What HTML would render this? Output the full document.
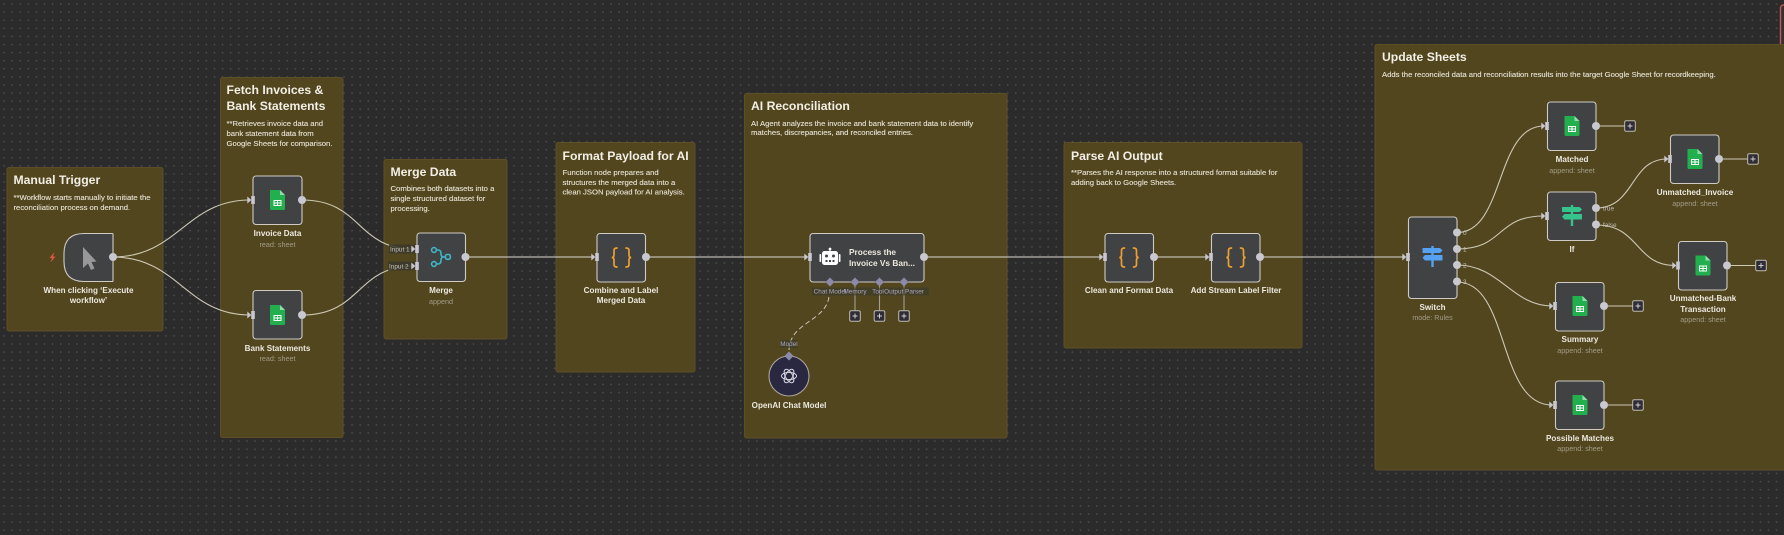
<!DOCTYPE html>
<html lang="en">
<head>
<meta charset="utf-8">
<title>Workflow</title>
<style>
html,body{margin:0;padding:0;width:1784px;height:535px;overflow:hidden;background:#2b2b2c}
#wrap{position:absolute;left:0;top:0;width:1784px;height:535px;background-color:#2b2b2c;background-image:radial-gradient(circle at 50% 50%,#4e4e50 .7px,transparent 1px);background-size:8.1px 8.1px;filter:blur(.35px)}
svg{position:absolute;left:0;top:0}
text{font-family:"Liberation Sans",sans-serif}
.st{fill:#52461f;stroke:#5c4f28;stroke-width:1}
.h{font-size:12.2px;font-weight:700;fill:#f3efe6}
.p{font-size:7.7px;fill:#e6e1d3;stroke:#e6e1d3;stroke-width:.12}
.n{fill:#414244;stroke:#cfcbc4;stroke-width:1.1}
.lb{font-size:8.1px;font-weight:700;fill:#ece8de;text-anchor:middle}
.sb{font-size:7.2px;fill:#a39d88;text-anchor:middle}
.e{fill:none;stroke:#cdc8b4;stroke-width:1.1}
.o{fill:#c9c8d0}
.pl rect{fill:#2e2c34;stroke:#bdb9b0;stroke-width:1}
.pl path{stroke:#cfcdd0;stroke-width:1;fill:none}
.sm{font-size:6.4px;fill:#c4c0bc}
.am{font-size:6.4px;fill:#a9a6c4;text-anchor:middle}
</style>
</head>
<body>
<div id="wrap">
<svg width="1784" height="535" viewBox="0 0 1784 535" xmlns="http://www.w3.org/2000/svg">
<defs>
<g id="sheet">
<path d="M-7.5-10H2.5L7.5-5V8.5Q7.5 10 6 10H-6Q-7.5 10-7.5 8.5Z" fill="#22b04f"/>
<path d="M2.5-10L7.5-5H2.5Z" fill="#8fdcaa"/>
<path d="M-4 0H4V6H-4ZM-3 1V2.5H-.5V1ZM.5 1V2.5H3V1ZM-3 3.5V5H-.5V3.5ZM.5 3.5V5H3V3.5Z" fill="#fff" fill-rule="evenodd"/>
</g>
<g id="brace" fill="none" stroke="#ef9f2e" stroke-width="1.7" stroke-linecap="round">
<path d="M-4.500-9.500Q-7.500-9.500-7.500-7V-2.500Q-7.500 0-9.700 0Q-7.500 0-7.500 2.500V7Q-7.500 9.500-4.500 9.500"/>
<path d="M4.500-9.500Q7.500-9.500 7.500-7V-2.500Q7.500 0 9.700 0Q7.500 0 7.500 2.500V7Q7.500 9.500 4.500 9.500"/>
</g>
<g id="post">
<rect x="-1.200" y="-11" width="2.400" height="21"/>
<path d="M-9.500-9H7.500L10-6.500L7.500-4H-9.500Q-10-4-10-4.500V-8.500Q-10-9-9.500-9Z"/>
<path d="M9.500-2H-7.500L-10 .8L-7.500 3.500H9.500Q10 3.500 10 3V-1.500Q10-2 9.500-2Z"/>
</g>
<g id="inp">
<path d="M-5.700-3.500L-1.700 0L-5.700 3.500Z" fill="#c9c8d0"/>
<rect x="-1.800" y="-4" width="3.600" height="8" fill="#c9c8d0"/>
</g>
<g id="plus" class="pl">
<rect x="-5.300" y="-5.300" width="10.600" height="10.600" rx="1.500"/>
<path d="M-2.500 0H2.500M0-2.500V2.500"/>
</g>
</defs>

<!-- top-right red frame -->
<rect x="1780.500" y="5" width="20" height="43" rx="3" fill="#3a2d2d" stroke="#b85a50" stroke-width="1.500"/>

<!-- stickies -->
<rect class="st" x="7" y="167.500" width="156" height="163.500" rx="2"/>
<rect class="st" x="220.500" y="77.500" width="122.500" height="360" rx="2"/>
<rect class="st" x="384" y="159.500" width="123" height="179.500" rx="2"/>
<rect class="st" x="556" y="142.500" width="139" height="229.500" rx="2"/>
<rect class="st" x="744.500" y="93.500" width="262.500" height="344.500" rx="2"/>
<rect class="st" x="1064" y="142.500" width="238" height="205.500" rx="2"/>
<rect class="st" x="1375" y="44.500" width="420" height="425.500" rx="2"/>

<!-- sticky text -->
<text class="h" x="13.500" y="184">Manual Trigger</text>
<text class="p" x="13.500" y="200">**Workflow starts manually to initiate the</text>
<text class="p" x="13.500" y="210">reconciliation process on demand.</text>

<text class="h" x="226.500" y="94">Fetch Invoices &amp;</text>
<text class="h" x="226.500" y="110">Bank Statements</text>
<text class="p" x="226.500" y="126">**Retrieves invoice data and</text>
<text class="p" x="226.500" y="136">bank statement data from</text>
<text class="p" x="226.500" y="146">Google Sheets for comparison.</text>

<text class="h" x="390.500" y="176">Merge Data</text>
<text class="p" x="390.500" y="191">Combines both datasets into a</text>
<text class="p" x="390.500" y="201">single structured dataset for</text>
<text class="p" x="390.500" y="211">processing.</text>

<text class="h" x="562.500" y="160">Format Payload for AI</text>
<text class="p" x="562.500" y="175">Function node prepares and</text>
<text class="p" x="562.500" y="185">structures the merged data into a</text>
<text class="p" x="562.500" y="194.500">clean JSON payload for AI analysis.</text>

<text class="h" x="751" y="110">AI Reconciliation</text>
<text class="p" x="751" y="126">AI Agent analyzes the invoice and bank statement data to identify</text>
<text class="p" x="751" y="135">matches, discrepancies, and reconciled entries.</text>

<text class="h" x="1071" y="160">Parse AI Output</text>
<text class="p" x="1071" y="175">**Parses the AI response into a structured format suitable for</text>
<text class="p" x="1071" y="185">adding back to Google Sheets.</text>

<text class="h" x="1382" y="61">Update Sheets</text>
<text class="p" x="1382" y="77">Adds the reconciled data and reconciliation results into the target Google Sheet for recordkeeping.</text>

<!-- edges -->
<path class="e" d="M113 257C178 257 186 200 250 200"/>
<path class="e" d="M113 257C178 257 186 315 250 315"/>
<path class="e" d="M302 200C362 200 356 249 414 249"/>
<path class="e" d="M302 315C362 315 356 266 414 266"/>
<path class="e" d="M465 257H594M646 257H807M924 257H1102M1154 257H1208M1260 257H1405" style="stroke:#dcdad0"/>
<path class="e" d="M1457 232.500C1505 232.500 1495 126 1544 126"/>
<path class="e" d="M1457 249C1505 249 1495 216 1544 216"/>
<path class="e" d="M1457 265C1500 265 1512 306 1552 306"/>
<path class="e" d="M1457 282C1510 282 1497 405 1552 405"/>
<path class="e" d="M1596 208C1635 208 1630 159 1667 159"/>
<path class="e" d="M1596 225C1640 225 1635 265.500 1675 265.500"/>
<path class="e" d="M1596 126H1625M1719 159H1748M1727 265.500H1756M1604 306H1633M1604 405H1633"/>
<path d="M855 286V311M879.500 286V311M904 286V311" fill="none" stroke="#a39d94" stroke-width="1.100"/>
<path d="M829 297C825 322 790 322 789 350" fill="none" stroke="#c9c5b4" stroke-width="1" stroke-dasharray="5 3"/>

<!-- nodes -->
<path class="n" d="M113 233.500V281Q113 281.500 112 281.500H84Q64 281.500 64 261.500V253.500Q64 233.500 84 233.500H112Q113 233.500 113 234.500Z"/>
<rect class="n" x="253" y="176" width="49" height="48.500" rx="3"/>
<rect class="n" x="253" y="290.500" width="49" height="48.500" rx="3"/>
<rect class="n" x="417" y="233" width="48.500" height="48.500" rx="3"/>
<rect class="n" x="597" y="233.500" width="48.500" height="48.500" rx="3"/>
<rect class="n" x="810" y="233.500" width="114" height="48.500" rx="3"/>
<circle cx="789" cy="376" r="20" fill="#2a2840" stroke="#a9a59c" stroke-width="1.100"/>
<rect class="n" x="1105" y="233.500" width="48.500" height="48.500" rx="3"/>
<rect class="n" x="1211.500" y="233.500" width="48.500" height="48.500" rx="3"/>
<rect class="n" x="1408.500" y="217" width="48.500" height="81.500" rx="3"/>
<rect class="n" x="1547.500" y="102" width="48.500" height="48.500" rx="3"/>
<rect class="n" x="1547.500" y="192" width="48.500" height="48.500" rx="3"/>
<rect class="n" x="1670.500" y="135" width="48.500" height="48.500" rx="3"/>
<rect class="n" x="1678.500" y="241.500" width="48.500" height="48.500" rx="3"/>
<rect class="n" x="1555.500" y="282.500" width="48.500" height="48.500" rx="3"/>
<rect class="n" x="1555.500" y="381" width="48.500" height="48.500" rx="3"/>

<!-- icons -->
<path d="M54.500 252L49.500 258H52L50.500 262.500L55.500 256.500H53Z" fill="#d9583f"/>
<path d="M83 247V268L88 263.500L91 270L94.500 268.500L91.500 262L96.500 261.500Z" fill="#98989a"/>
<use href="#sheet" x="277.500" y="200"/>
<use href="#sheet" x="277.500" y="315"/>
<use href="#sheet" x="1572" y="126"/>
<use href="#sheet" x="1695" y="159"/>
<use href="#sheet" x="1703" y="265.500"/>
<use href="#sheet" x="1580" y="306"/>
<use href="#sheet" x="1580" y="405"/>
<g fill="none" stroke="#3fb6c6" stroke-width="1.600">
<circle cx="434" cy="250" r="2.400"/>
<circle cx="434" cy="264" r="2.400"/>
<rect x="445.500" y="254.500" width="4.800" height="4.800" rx="1.500"/>
<path d="M436.500 250H438Q441 250 441 253.500V254Q441 257 444 257H445.500M436.500 264H438Q441 264 441 260.500V260Q441 257 444 257"/>
</g>
<use href="#brace" x="621.500" y="257.500"/>
<use href="#brace" x="1129" y="257.500"/>
<use href="#brace" x="1236" y="257.500"/>
<use href="#post" x="1432.500" y="257" fill="#55a2f0"/>
<use href="#post" x="1572" y="216" fill="#35c58c"/>
<!-- robot -->
<g fill="#fff">
<circle cx="830" cy="249" r="1.400"/>
<rect x="829.400" y="249" width="1.200" height="3"/>
<rect x="822" y="251" width="16" height="14" rx="2.500"/>
<rect x="819.500" y="254" width="1.700" height="8" rx=".8"/>
<rect x="838.800" y="254" width="1.700" height="8" rx=".8"/>
</g>
<g fill="#414244">
<circle cx="826.500" cy="256" r="1.500"/>
<circle cx="833.500" cy="256" r="1.500"/>
<rect x="825.500" y="260" width="2" height="2"/>
<rect x="829" y="260" width="2" height="2"/>
<rect x="832.500" y="260" width="2" height="2"/>
</g>
<!-- openai knot -->
<g fill="none" stroke="#d8d8e0" stroke-width="1" transform="translate(789 376)">
<ellipse rx="7.500" ry="3.600" transform="rotate(0)"/>
<ellipse rx="7.500" ry="3.600" transform="rotate(60)"/>
<ellipse rx="7.500" ry="3.600" transform="rotate(120)"/>
</g>

<!-- outputs -->
<g class="o">
<circle cx="113" cy="257" r="4"/>
<circle cx="302" cy="200" r="4"/>
<circle cx="302" cy="315" r="4"/>
<circle cx="465.500" cy="257" r="4"/>
<circle cx="646" cy="257" r="4"/>
<circle cx="924" cy="257" r="4"/>
<circle cx="1154" cy="257" r="4"/>
<circle cx="1260" cy="257" r="4"/>
<circle cx="1457" cy="232.500" r="4"/>
<circle cx="1457" cy="249" r="4"/>
<circle cx="1457" cy="265" r="4"/>
<circle cx="1457" cy="281.500" r="4"/>
<circle cx="1596" cy="126" r="4"/>
<circle cx="1596" cy="208" r="4"/>
<circle cx="1596" cy="224.500" r="4"/>
<circle cx="1719" cy="159" r="4"/>
<circle cx="1727" cy="265.500" r="4"/>
<circle cx="1604" cy="306" r="4"/>
<circle cx="1604" cy="405" r="4"/>
</g>
<!-- inputs -->
<use href="#inp" x="253" y="200"/>
<use href="#inp" x="253" y="315"/>
<rect x="389" y="244.500" width="27" height="9" fill="#3b382c" opacity=".85"/>
<rect x="388" y="261.500" width="27" height="9" fill="#3b382c" opacity=".85"/>
<use href="#inp" x="417" y="249"/>
<use href="#inp" x="417" y="266"/>
<use href="#inp" x="597" y="257"/>
<use href="#inp" x="810" y="257"/>
<use href="#inp" x="1105" y="257"/>
<use href="#inp" x="1211" y="257"/>
<use href="#inp" x="1408" y="257"/>
<use href="#inp" x="1547" y="126"/>
<use href="#inp" x="1547" y="216"/>
<use href="#inp" x="1670" y="159"/>
<use href="#inp" x="1678" y="265.500"/>
<use href="#inp" x="1555" y="306"/>
<use href="#inp" x="1555" y="405"/>

<!-- plus boxes -->
<use href="#plus" x="855" y="316"/>
<use href="#plus" x="879.500" y="316"/>
<use href="#plus" x="904" y="316"/>
<use href="#plus" x="1630" y="126"/>
<use href="#plus" x="1753" y="159"/>
<use href="#plus" x="1761" y="265.500"/>
<use href="#plus" x="1638" y="306"/>
<use href="#plus" x="1638" y="405"/>

<!-- diamonds -->
<g fill="#8d8aa8">
<path d="M830 277.500L834.500 282L830 286.500L825.500 282Z"/>
<path d="M855 277.500L859.500 282L855 286.500L850.500 282Z"/>
<path d="M879.500 277.500L884 282L879.500 286.500L875 282Z"/>
<path d="M904 277.500L908.500 282L904 286.500L899.500 282Z"/>
<path d="M789 351.500L793.500 356L789 360.500L784.500 356Z"/>
</g>

<!-- labels -->
<text class="lb" x="88.500" y="293">When clicking ‘Execute</text>
<text class="lb" x="88.500" y="303">workflow’</text>
<text class="lb" x="277.500" y="236">Invoice Data</text>
<text class="sb" x="277.500" y="247">read: sheet</text>
<text class="lb" x="277.500" y="351">Bank Statements</text>
<text class="sb" x="277.500" y="361">read: sheet</text>
<text class="lb" x="441" y="293">Merge</text>
<text class="sb" x="441" y="304">append</text>
<text class="lb" x="621" y="293">Combine and Label</text>
<text class="lb" x="621" y="303">Merged Data</text>
<text x="849" y="255" font-size="8.300" font-weight="700" fill="#ece8de">Process the</text>
<text x="849" y="266" font-size="8.300" font-weight="700" fill="#ece8de">Invoice Vs Ban...</text>
<text class="lb" x="789" y="408">OpenAI Chat Model</text>
<text class="lb" x="1129" y="293">Clean and Format Data</text>
<text class="lb" x="1236" y="293">Add Stream Label Filter</text>
<text class="lb" x="1432.500" y="310">Switch</text>
<text class="sb" x="1432.500" y="320">mode: Rules</text>
<text class="lb" x="1572" y="162">Matched</text>
<text class="sb" x="1572" y="173">append: sheet</text>
<text class="lb" x="1572" y="252">If</text>
<text class="lb" x="1695" y="195">Unmatched_Invoice</text>
<text class="sb" x="1695" y="206">append: sheet</text>
<text class="lb" x="1703" y="301">Unmatched-Bank</text>
<text class="lb" x="1703" y="312">Transaction</text>
<text class="sb" x="1703" y="322">append: sheet</text>
<text class="lb" x="1580" y="342">Summary</text>
<text class="sb" x="1580" y="353">append: sheet</text>
<text class="lb" x="1580" y="441">Possible Matches</text>
<text class="sb" x="1580" y="451">append: sheet</text>

<!-- port labels -->
<text class="sm" x="390" y="251.500">Input 1</text>
<text class="sm" x="389" y="268.500">Input 2</text>
<rect x="812" y="287.500" width="117" height="8" fill="#3b382c" opacity=".6"/>
<text class="am" x="830" y="293.500">Chat Model</text>
<text class="am" x="855" y="293.500">Memory</text>
<text class="am" x="878" y="293.500">Tool</text>
<text class="am" x="904" y="293.500">Output Parser</text>
<rect x="780" y="340" width="18" height="8" fill="#3b382c" opacity=".6"/>
<text class="am" x="789" y="346">Model</text>
<text class="sm" x="1463" y="235">0</text>
<text class="sm" x="1463" y="251.500">1</text>
<text class="sm" x="1463" y="267.500">2</text>
<text class="sm" x="1463" y="284">3</text>
<text class="sm" x="1603" y="210.500">true</text>
<text class="sm" x="1603" y="227">false</text>
</svg>
</div>
</body>
</html>
